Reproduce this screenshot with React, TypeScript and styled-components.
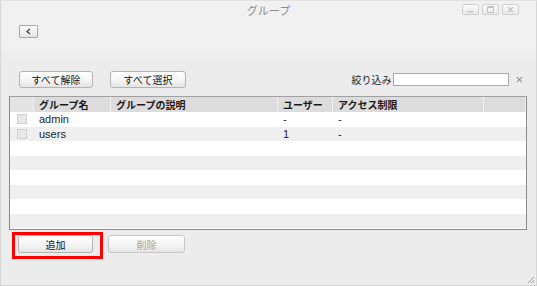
import React from "react";
import styled, { createGlobalStyle } from "styled-components";

const GlobalStyle = createGlobalStyle`
  html, body {
    margin: 0;
    padding: 0;
    background: #ececec;
  }
  body {
    font-family: "Liberation Sans", "Noto Sans CJK JP", sans-serif;
    font-size: 11px;
    color: #222;
  }
`;

const Window = styled.div`
  width: 537px;
  height: 286px;
  box-sizing: border-box;
  border: 1px solid #d6d6d6;
  border-top-color: #e2e2e2;
  background: linear-gradient(#f1f1f1 0, #f0f0f0 48px, #ececec 58px, #ececec 100%);
  display: flex;
  flex-direction: column;
  position: relative;
`;

const TitleBar = styled.div`
  height: 19px;
  display: flex;
  align-items: center;
  justify-content: center;
  position: relative;
`;

const Title = styled.div`
  font-family: "Noto Sans CJK JP", sans-serif;
  font-size: 11px;
  color: #8a8a8a;
  margin-top: -2px;
`;

const Controls = styled.div`
  position: absolute;
  right: 17px;
  top: 3px;
  display: flex;
  gap: 3px;
`;

const CtrlButton = styled.div`
  width: 15px;
  height: 9px;
  border: 1px solid #cfcfcf;
  border-radius: 2px;
  background: linear-gradient(#fbfbfb, #e9e9e9);
  display: flex;
  align-items: center;
  justify-content: center;
`;

const NavRow = styled.div`
  padding: 5px 0 0 18px;
  height: 51px;
  box-sizing: border-box;
`;

const BackButton = styled.div`
  width: 17px;
  height: 11px;
  border: 1px solid #a8a8a8;
  border-radius: 1px;
  background: linear-gradient(#fdfdfd, #e6e6e6);
  display: flex;
  align-items: center;
  justify-content: center;
`;

const ActionRow = styled.div`
  display: flex;
  align-items: center;
  padding: 0 0 0 18px;
  height: 17px;
`;

const Button = styled.div<{ $disabled?: boolean; $tall?: boolean }>`
  height: ${(p) => (p.$tall ? "16px" : "15px")};
  box-sizing: content-box;
  border: 1px solid #b9b9b9;
  border-radius: 3px;
  background: linear-gradient(#ffffff, #f3f3f3 60%, #e4e4e4);
  display: flex;
  align-items: center;
  justify-content: center;
  font-family: "Noto Sans CJK JP", sans-serif;
  font-size: 10px;
  color: ${(p) => (p.$disabled ? "#a3a3a3" : "#111")};
  border-color: ${(p) => (p.$disabled ? "#c8c8c8" : "#b4b4b4")};
`;

const Filter = styled.div`
  margin-left: auto;
  display: flex;
  align-items: center;
  margin-right: 13px;
`;

const FilterLabel = styled.span`
  font-family: "Noto Sans CJK JP", sans-serif;
  font-size: 10px;
  color: #222;
  margin-right: 2px;
`;

const FilterInput = styled.div`
  width: 114px;
  height: 11px;
  border: 1px solid #a9a9a9;
  background: #fff;
`;

const Clear = styled.span`
  margin-left: 6px;
  color: #8c8c8c;
  font-size: 13px;
  line-height: 1;
`;

const Table = styled.div`
  margin: 8px 0 0 8px;
  width: 518px;
  height: 134px;
  box-sizing: border-box;
  border: 1px solid #8a8a8a;
  border-top-color: #a0a0a0;
  background: #fff;
  display: flex;
  flex-direction: column;
  overflow: hidden;
`;

const cols = "24px 77px 167px 55px 151px 1fr";

const HeaderRow = styled.div`
  display: grid;
  grid-template-columns: ${cols};
  height: 15px;
  background: #dedede;
`;

const HeaderCell = styled.div<{ $first?: boolean }>`
  display: flex;
  align-items: center;
  padding-left: 5px;
  border-right: 1px solid #f0f0f0;
  background: ${(p) => (p.$first ? "#e3e3e3" : "#dcdcdc")};
  font-family: "Noto Sans CJK JP", sans-serif;
  font-weight: 700;
  font-size: 10px;
  color: #1a1a1a;
  white-space: nowrap;
  overflow: hidden;
`;

const Row = styled.div<{ $odd: boolean }>`
  display: grid;
  grid-template-columns: ${cols};
  height: 14.5px;
  background: ${(p) => (p.$odd ? "#efefef" : "#fff")};
`;

const Cell = styled.div`
  display: flex;
  align-items: center;
  padding-left: 5px;
  font-size: 11px;
  color: #1e1e1e;
  white-space: nowrap;
`;

const CheckCell = styled.div`
  display: flex;
  align-items: center;
  padding-left: 7px;
`;

const Check = styled.div`
  width: 8px;
  height: 8px;
  border: 1px solid #d0d0d0;
  background: #e8e8e8;
`;

const BottomRow = styled.div`
  display: flex;
  align-items: flex-start;
  gap: 5px;
  padding: 2px 0 0 11px;
`;

const Highlight = styled.div`
  border: 3px solid #f00;
  padding: 0 7px 3px 3px;
  display: flex;
  align-items: flex-start;
`;

const Grip = styled.svg`
  position: absolute;
  right: 1px;
  bottom: 1px;
`;

const groups = [
  { name: "admin", users: "-", access: "-" },
  { name: "users", users: "1", access: "-" },
];

export default function App() {
  const rows = Array.from({ length: 8 }, (_, i) => groups[i]);
  return (
    <>
      <GlobalStyle />
      <Window>
        <TitleBar>
          <Title>グループ</Title>
          <Controls>
            <CtrlButton>
              <svg width="7" height="7" viewBox="0 0 7 7">
                <rect x="0.5" y="5" width="6" height="1.5" fill="#c4c4c4" />
              </svg>
            </CtrlButton>
            <CtrlButton>
              <svg width="7" height="7" viewBox="0 0 7 7">
                <rect x="0.5" y="0.5" width="6" height="6" fill="none" stroke="#c4c4c4" />
                <rect x="0.5" y="0.5" width="6" height="1.5" fill="#c4c4c4" />
              </svg>
            </CtrlButton>
            <CtrlButton>
              <svg width="7" height="7" viewBox="0 0 7 7">
                <path d="M1 1 L6 6 M6 1 L1 6" stroke="#c4c4c4" strokeWidth="1.3" />
              </svg>
            </CtrlButton>
          </Controls>
        </TitleBar>
        <NavRow>
          <BackButton>
            <svg width="7" height="7" viewBox="0 0 7 7">
              <path d="M5 1 L2 3.5 L5 6" fill="none" stroke="#444" strokeWidth="1.3" />
            </svg>
          </BackButton>
        </NavRow>
        <ActionRow>
          <Button style={{ width: 72 }}>すべて解除</Button>
          <Button style={{ width: 74, marginLeft: 17 }}>すべて選択</Button>
          <Filter>
            <FilterLabel>絞り込み</FilterLabel>
            <FilterInput />
            <Clear>×</Clear>
          </Filter>
        </ActionRow>
        <Table>
          <HeaderRow>
            <HeaderCell $first />
            <HeaderCell>グループ名</HeaderCell>
            <HeaderCell>グループの説明</HeaderCell>
            <HeaderCell>ユーザー</HeaderCell>
            <HeaderCell>アクセス制限</HeaderCell>
            <HeaderCell />
          </HeaderRow>
          {rows.map((g, i) => (
            <Row key={i} $odd={i % 2 === 1}>
              <CheckCell>{g && <Check />}</CheckCell>
              <Cell>{g?.name}</Cell>
              <Cell />
              <Cell>{g?.users}</Cell>
              <Cell>{g?.access}</Cell>
              <Cell />
            </Row>
          ))}
        </Table>
        <BottomRow>
          <Highlight>
            <Button $tall style={{ width: 73 }}>
              追加
            </Button>
          </Highlight>
          <Button $tall $disabled style={{ width: 75, marginTop: 3 }}>
            削除
          </Button>
        </BottomRow>
        <Grip width="8" height="8" viewBox="0 0 8 8">
          <path d="M7 1 L1 7 M7 4 L4 7 M7 6.5 L6.5 7" stroke="#9a9a9a" strokeWidth="1" />
        </Grip>
      </Window>
    </>
  );
}
